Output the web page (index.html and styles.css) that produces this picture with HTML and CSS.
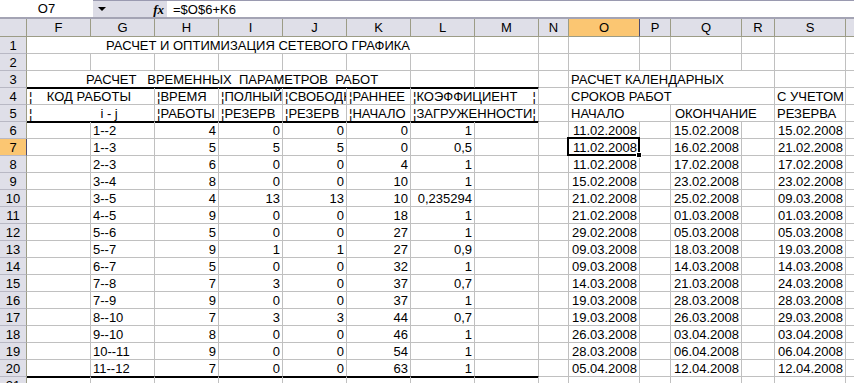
FILE: index.html
```html
<!DOCTYPE html>
<html lang="ru">
<head>
  <meta charset="UTF-8">
  <title>Сетевой график</title>
  <link rel="stylesheet" href="styles.css">
</head>
<body>
  <!-- Строка формул -->
  <div class="formula-bar">
    <div class="name-box">O7</div>
    <div class="name-drop"><span class="drop-arrow"></span><span class="fx">fx</span></div>
    <div class="formula">=$O$6+K6</div>
  </div>

  <!-- Лист -->
  <table class="sheet">
    <colgroup>
      <col class="c-head">
      <col class="c-std"><col class="c-std"><col class="c-std"><col class="c-std">
      <col class="c-std"><col class="c-std"><col class="c-std"><col class="c-std">
      <col class="c-n"><col class="c-date"><col class="c-p"><col class="c-date">
      <col class="c-r"><col class="c-date"><col class="c-t">
    </colgroup>
    <thead>
      <tr>
        <th></th><th>F</th><th>G</th><th>H</th><th>I</th><th>J</th><th>K</th><th>L</th><th>M</th>
        <th>N</th><th class="hl">O</th><th>P</th><th>Q</th><th>R</th><th>S</th><th></th>
      </tr>
    </thead>
    <tbody>
      <tr>
        <th>1</th>
        <td colspan="7" class="title">РАСЧЕТ И ОПТИМИЗАЦИЯ СЕТЕВОГО ГРАФИКА</td>
        <td></td><td></td><td></td><td></td><td></td><td></td><td></td><td></td>
      </tr>
      <tr>
        <th>2</th>
        <td></td><td></td><td></td><td></td><td></td><td></td><td></td><td></td>
        <td></td><td></td><td></td><td></td><td></td><td></td><td></td>
      </tr>
      <tr>
        <th>3</th>
        <td colspan="6" class="subtitle rule-b">РАСЧЕТ   ВРЕМЕННЫХ  ПАРАМЕТРОВ  РАБОТ</td>
        <td class="rule-b"></td><td class="rule-b"></td>
        <td></td><td colspan="4">РАСЧЕТ КАЛЕНДАРНЫХ</td><td></td><td></td>
      </tr>
      <tr>
        <th>4</th>
        <td colspan="2" class="rule-t">¦    КОД РАБОТЫ</td>
        <td class="rule-t">¦ВРЕМЯ</td>
        <td class="rule-t">¦ПОЛНЫЙ</td>
        <td class="rule-t">¦СВОБОДН</td>
        <td class="rule-t">¦РАННЕЕ</td>
        <td colspan="2" class="rule-t">¦КОЭФФИЦИЕНТ<span class="bar-end">¦</span></td>
        <td></td><td colspan="4">СРОКОВ РАБОТ</td><td>С УЧЕТОМ</td><td></td>
      </tr>
      <tr>
        <th>5</th>
        <td colspan="2" class="rule-b">¦<span class="ij">i - j</span></td>
        <td class="rule-b">¦РАБОТЫ</td>
        <td class="rule-b">¦РЕЗЕРВ</td>
        <td class="rule-b">¦РЕЗЕРВ</td>
        <td class="rule-b">¦НАЧАЛО</td>
        <td colspan="2" class="rule-b">¦ЗАГРУЖЕННОСТИ<span class="bar-end">¦</span></td>
        <td></td><td colspan="2">НАЧАЛО</td><td colspan="2" class="end-head">ОКОНЧАНИЕ</td><td>РЕЗЕРВА</td><td></td>
      </tr>
      <tr class="data">
        <th>6</th>
        <td class="rule-t"></td><td class="rule-t">1--2</td><td class="rule-t">4</td><td class="rule-t">0</td><td class="rule-t">0</td><td class="rule-t">0</td><td class="rule-t">1</td><td class="rule-t"></td>
        <td></td><td>11.02.2008</td><td></td><td>15.02.2008</td><td></td><td>15.02.2008</td><td></td>
      </tr>
      <tr class="data">
        <th class="hl">7</th>
        <td></td><td>1--3</td><td>5</td><td>5</td><td>5</td><td>0</td><td>0,5</td><td></td>
        <td></td><td class="active">11.02.2008</td><td></td><td>16.02.2008</td><td></td><td>21.02.2008</td><td></td>
      </tr>
      <tr class="data">
        <th>8</th>
        <td></td><td>2--3</td><td>6</td><td>0</td><td>0</td><td>4</td><td>1</td><td></td>
        <td></td><td>11.02.2008</td><td></td><td>17.02.2008</td><td></td><td>17.02.2008</td><td></td>
      </tr>
      <tr class="data">
        <th>9</th>
        <td></td><td>3--4</td><td>8</td><td>0</td><td>0</td><td>10</td><td>1</td><td></td>
        <td></td><td>15.02.2008</td><td></td><td>23.02.2008</td><td></td><td>23.02.2008</td><td></td>
      </tr>
      <tr class="data">
        <th>10</th>
        <td></td><td>3--5</td><td>4</td><td>13</td><td>13</td><td>10</td><td>0,235294</td><td></td>
        <td></td><td>21.02.2008</td><td></td><td>25.02.2008</td><td></td><td>09.03.2008</td><td></td>
      </tr>
      <tr class="data">
        <th>11</th>
        <td></td><td>4--5</td><td>9</td><td>0</td><td>0</td><td>18</td><td>1</td><td></td>
        <td></td><td>21.02.2008</td><td></td><td>01.03.2008</td><td></td><td>01.03.2008</td><td></td>
      </tr>
      <tr class="data">
        <th>12</th>
        <td></td><td>5--6</td><td>5</td><td>0</td><td>0</td><td>27</td><td>1</td><td></td>
        <td></td><td>29.02.2008</td><td></td><td>05.03.2008</td><td></td><td>05.03.2008</td><td></td>
      </tr>
      <tr class="data">
        <th>13</th>
        <td></td><td>5--7</td><td>9</td><td>1</td><td>1</td><td>27</td><td>0,9</td><td></td>
        <td></td><td>09.03.2008</td><td></td><td>18.03.2008</td><td></td><td>19.03.2008</td><td></td>
      </tr>
      <tr class="data">
        <th>14</th>
        <td></td><td>6--7</td><td>5</td><td>0</td><td>0</td><td>32</td><td>1</td><td></td>
        <td></td><td>09.03.2008</td><td></td><td>14.03.2008</td><td></td><td>14.03.2008</td><td></td>
      </tr>
      <tr class="data">
        <th>15</th>
        <td></td><td>7--8</td><td>7</td><td>3</td><td>0</td><td>37</td><td>0,7</td><td></td>
        <td></td><td>14.03.2008</td><td></td><td>21.03.2008</td><td></td><td>24.03.2008</td><td></td>
      </tr>
      <tr class="data">
        <th>16</th>
        <td></td><td>7--9</td><td>9</td><td>0</td><td>0</td><td>37</td><td>1</td><td></td>
        <td></td><td>19.03.2008</td><td></td><td>28.03.2008</td><td></td><td>28.03.2008</td><td></td>
      </tr>
      <tr class="data">
        <th>17</th>
        <td></td><td>8--10</td><td>7</td><td>3</td><td>3</td><td>44</td><td>0,7</td><td></td>
        <td></td><td>19.03.2008</td><td></td><td>26.03.2008</td><td></td><td>29.03.2008</td><td></td>
      </tr>
      <tr class="data">
        <th>18</th>
        <td></td><td>9--10</td><td>8</td><td>0</td><td>0</td><td>46</td><td>1</td><td></td>
        <td></td><td>26.03.2008</td><td></td><td>03.04.2008</td><td></td><td>03.04.2008</td><td></td>
      </tr>
      <tr class="data">
        <th>19</th>
        <td></td><td>10--11</td><td>9</td><td>0</td><td>0</td><td>54</td><td>1</td><td></td>
        <td></td><td>28.03.2008</td><td></td><td>06.04.2008</td><td></td><td>06.04.2008</td><td></td>
      </tr>
      <tr class="data">
        <th>20</th>
        <td class="rule-b"></td><td class="rule-b">11--12</td><td class="rule-b">7</td><td class="rule-b">0</td><td class="rule-b">0</td><td class="rule-b">63</td><td class="rule-b">1</td><td class="rule-b"></td>
        <td></td><td>05.04.2008</td><td></td><td>12.04.2008</td><td></td><td>12.04.2008</td><td></td>
      </tr>
      <tr>
        <th>21</th>
        <td class="rule-t"></td><td class="rule-t"></td><td class="rule-t"></td><td class="rule-t"></td><td class="rule-t"></td><td class="rule-t"></td><td class="rule-t"></td><td class="rule-t"></td>
        <td></td><td></td><td></td><td></td><td></td><td></td><td></td>
      </tr>
    </tbody>
  </table>
</body>
</html>
```

FILE: styles.css
```css
body {
  margin: 0;
  height: 383px;
  overflow: hidden;
  background: #fff;
  color: #000;
  font-family: "Liberation Sans", Arial, sans-serif;
  font-size: 13px;
}

/* строка формул */
.formula-bar {
  display: flex;
  height: 17px;
  line-height: 17px;
  border-bottom: 2px solid #a4a4b4;
}
.name-box {
  width: 93px;
  text-align: center;
  background: #fff;
}
.name-drop {
  width: 74px;
  display: flex;
  align-items: center;
  background: #dcdce6;
  border-top: 1px solid #9a9ab0;
}
.drop-arrow {
  margin-left: 5px;
  border-left: 4px solid transparent;
  border-right: 4px solid transparent;
  border-top: 4px solid #000;
}
.fx {
  margin-left: auto;
  margin-right: 3px;
  font-family: "Liberation Serif", serif;
  font-style: italic;
  font-weight: bold;
  font-size: 13px;
}
.formula {
  flex: 1;
  padding-left: 6px;
  background: #fff;
  border-top: 1px solid #9a9ab0;
}

/* таблица */
.sheet {
  table-layout: fixed;
  width: 855px;
  border-collapse: separate;
  border-spacing: 0;
}
.c-head { width: 27px; }
.c-std { width: 64px; }
.c-n { width: 30px; }
.c-date { width: 71px; }
.c-p { width: 31px; }
.c-r { width: 33px; }
.c-t { width: 9px; }

.sheet th,
.sheet td {
  box-sizing: border-box;
  height: 17px;
  padding: 0 2px;
  line-height: 15px;
  vertical-align: bottom;
  white-space: pre;
  overflow: hidden;
}
.sheet td {
  border-right: 1px solid #c0c0c0;
  border-bottom: 1px solid #c0c0c0;
}
.sheet th {
  font-weight: normal;
  text-align: center;
  background: #dfdfe8;
  border-right: 1px solid #9c9c86;
  border-bottom: 1px solid #b8b8c4;
}
.sheet thead th {
  height: 18px;
  line-height: 17px;
  border-bottom: 1px solid #9c9c86;
}
.sheet th.hl {
  background: #fbc672;
  border-right-color: #4b4b6f;
}

.sheet td.title { padding-left: 79px; }
.sheet td.subtitle { padding-left: 59px; }
.sheet td.end-head { padding-left: 4px; }
.ij { margin-left: 68px; }
.bar-end { float: right; }

.sheet td.rule-b { border-bottom-color: #000; }
.rule-t { box-shadow: inset 0 1px #000; }

.data td:nth-child(n+4) { text-align: right; }

/* выделенная ячейка */
.sheet td.active {
  position: relative;
  overflow: visible;
}
.active::before {
  content: "";
  position: absolute;
  top: -2px;
  left: -2px;
  right: -1px;
  bottom: -1px;
  border: 2px solid #000;
}
.active::after {
  content: "";
  position: absolute;
  right: -3px;
  bottom: -3px;
  width: 4px;
  height: 4px;
  background: #000;
  border: 1px solid #fff;
}
```
